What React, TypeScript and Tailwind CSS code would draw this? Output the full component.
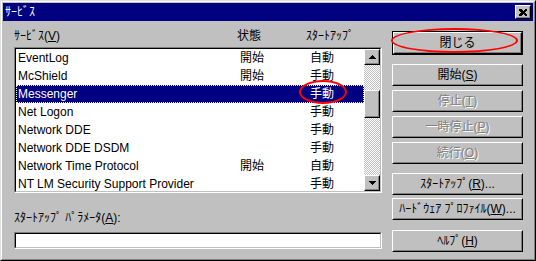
import React from 'react';
import clsx from 'clsx';

const services = [
  { name: 'EventLog', status: '開始', startup: '自動' },
  { name: 'McShield', status: '開始', startup: '手動' },
  { name: 'Messenger', status: '', startup: '手動', selected: true },
  { name: 'Net Logon', status: '', startup: '手動' },
  { name: 'Network DDE', status: '', startup: '手動' },
  { name: 'Network DDE DSDM', status: '', startup: '手動' },
  { name: 'Network Time Protocol', status: '開始', startup: '自動' },
  { name: 'NT LM Security Support Provider', status: '', startup: '手動' },
];

const Btn = ({
  children,
  disabled,
  className,
}: {
  children: React.ReactNode;
  disabled?: boolean;
  className?: string;
}) => (
  <div
    className={clsx(
      'h-[22px] border border-t-white border-l-white border-r-black border-b-black bg-[#c0c0c0]',
      className
    )}>
    <div
      className={clsx(
        'flex h-full items-center justify-center border border-t-[#c0c0c0] border-l-[#c0c0c0] border-r-[#808080] border-b-[#808080] leading-none',
        disabled ? 'text-[#808080] [text-shadow:1px_1px_0_#ffffff]' : 'text-black'
      )}>
      {children}
    </div>
  </div>
);

const ArrowBtn = ({ down }: { down?: boolean }) => (
  <div className="h-[16px] w-[16px] border border-t-white border-l-white border-r-black border-b-black bg-[#c0c0c0]">
    <div className="flex h-full items-center justify-center border border-t-[#c0c0c0] border-l-[#c0c0c0] border-r-[#808080] border-b-[#808080]">
      <svg width="7" height="4" viewBox="0 0 7 4" shapeRendering="crispEdges">
        {down ? <polygon points="0,0 7,0 3.5,4" fill="#000" /> : <polygon points="3.5,0 7,4 0,4" fill="#000" />}
      </svg>
    </div>
  </div>
);

const checker =
  'bg-[repeating-conic-gradient(#c0c0c0_0_25%,#ffffff_0_50%)] bg-[length:2px_2px]';

export default function App() {
  return (
    <div className="relative h-[261px] w-[536px] bg-[#c0c0c0] text-[12px] text-black [font-family:'Liberation_Sans','Noto_Sans_CJK_JP',sans-serif]">
      <div className="h-full border border-t-[#dfdfdf] border-l-[#dfdfdf] border-r-black border-b-black">
        <div className="flex h-full flex-col border border-t-white border-l-white border-r-[#808080] border-b-[#808080] p-px">
          {/* title bar */}
          <div className="flex h-[18px] items-center justify-between bg-[#000080] pr-[2px] pl-[2px] text-white">
            <span className="leading-none">ｻｰﾋﾞｽ</span>
            <div className="h-[14px] w-[16px] border border-t-white border-l-white border-r-black border-b-black bg-[#c0c0c0]">
              <div className="flex h-full items-center justify-center border border-t-[#c0c0c0] border-l-[#c0c0c0] border-r-[#808080] border-b-[#808080]">
                <svg width="8" height="7" viewBox="0 0 8 7" shapeRendering="crispEdges">
                  <path d="M0 0h2l2 2 2-2h2v1L6 3.5 8 6v1H6L4 5 2 7H0V6l2-2.5L0 1z" fill="#000" />
                </svg>
              </div>
            </div>
          </div>

          <div className="flex flex-1 pl-[11px]">
            {/* left column */}
            <div className="w-[368px] pt-[7px]">
              <div className="flex h-[16px] items-center">
                <span className="w-[223px]">
                  ｻｰﾋﾞｽ(<span className="underline">V</span>)
                </span>
                <span className="w-[69px]">状態</span>
                <span>ｽﾀｰﾄｱｯﾌﾟ</span>
              </div>

              <div className="mt-[3px] h-[146px] border border-t-[#808080] border-l-[#808080] border-r-white border-b-white">
                <div className="flex h-full border border-t-black border-l-black border-r-[#c0c0c0] border-b-[#c0c0c0] bg-white">
                  <div className="flex-1 overflow-hidden">
                    {services.map((s) => (
                      <div
                        key={s.name}
                        className={clsx(
                          'flex h-[18px] items-center whitespace-nowrap',
                          s.selected
                            ? 'border border-dotted border-[#ffff80] bg-[#000080] pl-px text-white'
                            : 'pl-[2px]'
                        )}>
                        <span className="w-[222px]">{s.name}</span>
                        <span className="w-[70px]">{s.status}</span>
                        <span>{s.startup}</span>
                      </div>
                    ))}
                  </div>
                  {/* scrollbar */}
                  <div className="flex w-[16px] flex-col">
                    <ArrowBtn />
                    <div className={clsx('h-[25px]', checker)} />
                    <div className="h-[28px] border border-t-white border-l-white border-r-black border-b-black bg-[#c0c0c0]">
                      <div className="h-full border border-t-[#c0c0c0] border-l-[#c0c0c0] border-r-[#808080] border-b-[#808080]" />
                    </div>
                    <div className={clsx('flex-1', checker)} />
                    <ArrowBtn down />
                  </div>
                </div>
              </div>

              <div className="mt-[17px] flex h-[16px] items-center">
                ｽﾀｰﾄｱｯﾌﾟ ﾊﾟﾗﾒｰﾀ(<span className="underline">A</span>):
              </div>
              <div className="mt-[6px] h-[17px] border border-t-[#808080] border-l-[#808080] border-r-white border-b-white">
                <div className="h-full border border-t-black border-l-black border-r-[#c0c0c0] border-b-[#c0c0c0] bg-white" />
              </div>
            </div>

            {/* right column */}
            <div className="ml-[10px] flex w-[131px] flex-col pt-[10px]">
              <div className="border border-black">
                <Btn className="h-[20px]">閉じる</Btn>
              </div>
              <Btn className="mt-[9px]">
                開始(<span className="underline">S</span>)
              </Btn>
              <Btn className="mt-[4px]" disabled>
                停止(<span className="underline">T</span>)
              </Btn>
              <Btn className="mt-[4px]" disabled>
                一時停止(<span className="underline">P</span>)
              </Btn>
              <Btn className="mt-[4px]" disabled>
                続行(<span className="underline">O</span>)
              </Btn>
              <Btn className="mt-[9px]">
                ｽﾀｰﾄｱｯﾌﾟ(<span className="underline">R</span>)...
              </Btn>
              <Btn className="mt-[3px]">
                ﾊｰﾄﾞｳｪｱ ﾌﾟﾛﾌｧｲﾙ(<span className="underline">W</span>)...
              </Btn>
              <Btn className="mt-[10px]">
                ﾍﾙﾌﾟ(<span className="underline">H</span>)
              </Btn>
            </div>
          </div>
        </div>
      </div>

      {/* red annotation ellipses */}
      <div className="pointer-events-none absolute top-[28px] left-[391px] h-[25px] w-[127px] rounded-[50%] border-2 border-[#ff0000]" />
      <div className="pointer-events-none absolute top-[80px] left-[299px] h-[24px] w-[48px] rounded-[50%] border-2 border-[#ff0000]" />
    </div>
  );
}
